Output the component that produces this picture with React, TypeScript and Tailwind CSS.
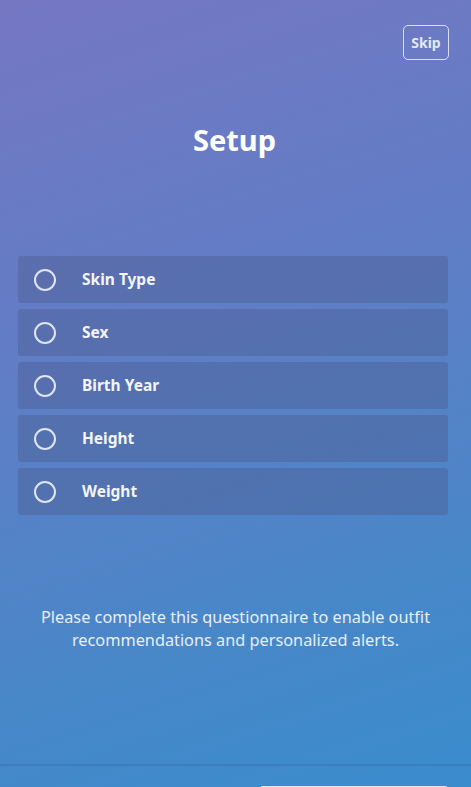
import React from 'react';

const fields = ['Skin Type', 'Sex', 'Birth Year', 'Height', 'Weight'];

const App: React.FC = () => {
  return (
    <div
      className="relative h-[787px] w-full overflow-hidden bg-[linear-gradient(162deg,#7677c3_0%,#5f7ec6_42%,#4887c8_75%,#3a8ccc_100%)] text-white flex flex-col"
      style={{ fontFamily: '"Noto Sans", "Open Sans", sans-serif' }}
    >
      <div className="flex justify-end px-[22px] pt-[25px]">
        <button className="h-[35px] w-[46px] rounded-[5px] border-[1.5px] border-white/75 text-[14px] font-bold text-[#e4e9f7] flex items-center justify-center">
          Skip
        </button>
      </div>

      <h1 className="mt-[61px] text-center text-[29px] font-bold leading-[38px] -ml-[2px]">Setup</h1>

      <div className="mt-[97px] flex flex-col gap-[6px] px-[18px] pr-[23px]">
        {fields.map((f) => (
          <div
            key={f}
            className="flex h-[47px] items-center rounded-[3px] bg-[#4a5a8c]/40 pl-[16px]"
          >
            <div className="h-[22px] w-[22px] rounded-full border-2 border-[#dfe5f4]" />
            <span className="ml-[26px] text-[15.5px] font-bold text-[#f3f5fb]">{f}</span>
          </div>
        ))}
      </div>

      <p className="mt-[91px] px-6 text-center text-[16.3px] leading-[23px] text-[#e8eefa]">
        Please complete this questionnaire to enable outfit
        <br />
        recommendations and personalized alerts.
      </p>

      <div className="mt-auto border-t-2 border-[#3a77b6]/70 h-[23px] flex justify-end pr-[23px]">
        <div className="mt-[20px] h-[10px] w-[188px] rounded-t-[3px] bg-[#dce8f5]" />
      </div>
    </div>
  );
};

export default App;
